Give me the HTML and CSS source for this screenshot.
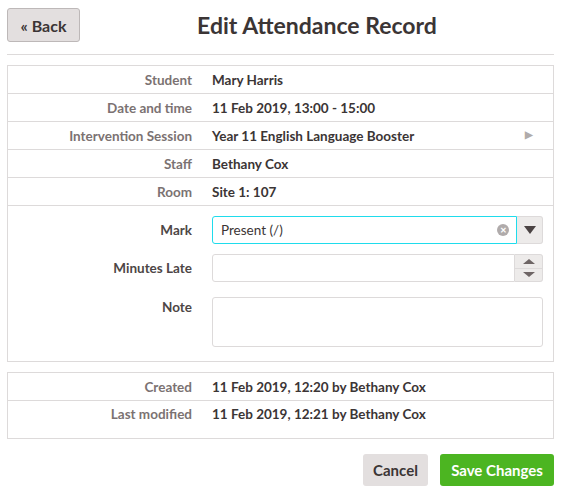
FILE: index.html
```html
<!DOCTYPE html>
<html lang="en">
<head>
    <meta charset="UTF-8">
    <meta name="viewport" content="width=device-width, initial-scale=1.0">
    <title>Edit Attendance Record</title>
    <link rel="stylesheet" href="styles.css">
</head>
<body>
    <div class="page">
        <div class="header">
            <button class="back-btn">&laquo; Back</button>
            <h1>Edit Attendance Record</h1>
        </div>

        <div class="panel">
            <div class="row">
                <div class="label">Student</div>
                <div class="value">Mary Harris</div>
            </div>
            <div class="row">
                <div class="label">Date and time</div>
                <div class="value">11 Feb 2019, 13:00 - 15:00</div>
            </div>
            <div class="row">
                <div class="label">Intervention Session</div>
                <div class="value link">Year 11 English Language Booster <span class="arrow">&#9654;</span></div>
            </div>
            <div class="row">
                <div class="label">Staff</div>
                <div class="value">Bethany Cox</div>
            </div>
            <div class="row">
                <div class="label">Room</div>
                <div class="value">Site 1: 107</div>
            </div>
            <div class="form">
                <div class="field">
                    <label class="field-label">Mark</label>
                    <div class="select">
                        <div class="select-box">
                            <span>Present (/)</span>
                            <span class="clear">&#10005;</span>
                        </div>
                        <div class="select-btn"><span class="tri-down"></span></div>
                    </div>
                </div>
                <div class="field">
                    <label class="field-label">Minutes Late</label>
                    <div class="number">
                        <div class="number-box"></div>
                        <div class="spin">
                            <div class="spin-half"><span class="tri-up small"></span></div>
                            <div class="spin-half"><span class="tri-down small"></span></div>
                        </div>
                    </div>
                </div>
                <div class="field note-field">
                    <label class="field-label">Note</label>
                    <div class="note"></div>
                </div>
            </div>
        </div>

        <div class="panel meta">
            <div class="row">
                <div class="label">Created</div>
                <div class="value">11 Feb 2019, 12:20 by Bethany Cox</div>
            </div>
            <div class="row last">
                <div class="label">Last modified</div>
                <div class="value">11 Feb 2019, 12:21 by Bethany Cox</div>
            </div>
        </div>

        <div class="actions">
            <button class="cancel-btn">Cancel</button>
            <button class="save-btn">Save Changes</button>
        </div>
    </div>
</body>
</html>
```

FILE: styles.css
```css
body {
    margin: 0;
    font-family: Lato, "Open Sans", sans-serif;
    font-size: 13.5px;
    color: #3b3535;
    background: #fff;
}
.page {
    padding: 8px 10px 0 7px;
}
.header {
    display: flex;
    align-items: center;
    padding-bottom: 12px;
    border-bottom: 1px solid #dddada;
    margin-bottom: 10px;
}
.back-btn {
    font-family: inherit;
    font-size: 16px;
    font-weight: bold;
    color: #3b3535;
    background: #e3dfdf;
    border: 1px solid #bdb8b8;
    border-radius: 3px;
    width: 73px;
    height: 34px;
    padding: 0;
}
h1 {
    flex: 1;
    margin: 0;
    text-align: center;
    font-size: 23px;
    font-weight: bold;
    color: #3b3535;
}
.panel {
    border: 1px solid #dddada;
}
.row {
    display: grid;
    grid-template-columns: 184px 1fr;
    column-gap: 20px;
    height: 27px;
    align-items: center;
    border-bottom: 1px solid #dddada;
}
.label {
    text-align: right;
    font-weight: bold;
    color: #7b7272;
}
.value {
    font-weight: bold;
    color: #3b3535;
}
.link {
    display: flex;
    justify-content: space-between;
    padding-right: 20px;
}
.arrow {
    color: #b0abab;
    font-size: 10px;
}
.form {
    padding: 10px 10px 14px 0;
}
.field {
    display: grid;
    grid-template-columns: 184px 1fr;
    column-gap: 20px;
    margin-bottom: 10px;
}
.field.note-field {
    margin-top: 15px;
    margin-bottom: 0;
}
.field-label {
    text-align: right;
    font-weight: bold;
    color: #4d4646;
    line-height: 28px;
}
.note-field .field-label {
    line-height: 20px;
}
.select, .number {
    display: flex;
    height: 28px;
}
.select-box {
    flex: 1;
    display: flex;
    align-items: center;
    justify-content: space-between;
    border: 1px solid #1fdcec;
    border-radius: 3px 0 0 3px;
    padding: 0 7px 0 8px;
    color: #3b3535;
}
.clear {
    width: 12px;
    height: 12px;
    border-radius: 50%;
    background: #b0abab;
    color: #fff;
    font-size: 8px;
    font-weight: bold;
    line-height: 12px;
    text-align: center;
}
.select-btn {
    width: 25px;
    background: #edebea;
    border: 1px solid #dddada;
    border-left: none;
    border-radius: 0 3px 3px 0;
    display: flex;
    align-items: center;
    justify-content: center;
}
.tri-down {
    width: 0;
    height: 0;
    border-left: 6px solid transparent;
    border-right: 6px solid transparent;
    border-top: 8px solid #4a4343;
}
.tri-up {
    width: 0;
    height: 0;
    border-left: 6px solid transparent;
    border-right: 6px solid transparent;
    border-bottom: 8px solid #4a4343;
}
.tri-down.small {
    border-top: 5px solid #6e6565;
}
.tri-up.small {
    border-bottom: 5px solid #6e6565;
}
.number-box {
    flex: 1;
    border: 1px solid #dddada;
    border-radius: 3px 0 0 3px;
}
.spin {
    width: 27px;
    background: #edebea;
    border: 1px solid #dddada;
    border-left: none;
    border-radius: 0 3px 3px 0;
    display: flex;
    flex-direction: column;
}
.spin-half {
    flex: 1;
    display: flex;
    align-items: center;
    justify-content: center;
}
.spin-half:first-child {
    border-bottom: 1px solid #dddada;
}
.note {
    height: 48px;
    border: 1px solid #dddada;
    border-radius: 3px;
}
.meta {
    margin-top: 10px;
}
.meta .row.last {
    border-bottom: none;
    height: 37px;
    align-items: start;
}
.meta .row.last > div {
    line-height: 27px;
}
.actions {
    display: flex;
    justify-content: flex-end;
    gap: 12px;
    margin-top: 15px;
}
.actions button {
    font-family: inherit;
    font-size: 15px;
    font-weight: bold;
    border: none;
    border-radius: 3px;
    height: 32px;
    padding: 0 10px;
}
.cancel-btn {
    background: #e3dfdf;
    color: #3b3535;
    width: 65px;
}
.save-btn {
    background: #4cb521;
    color: #fff;
    width: 114px;
}
```
